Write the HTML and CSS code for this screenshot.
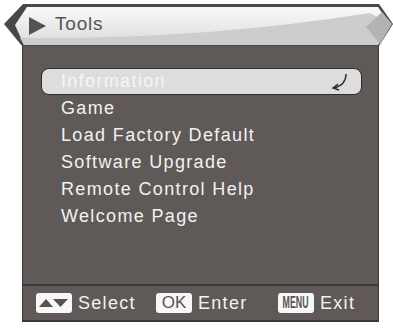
FILE: index.html
```html
<!DOCTYPE html>
<html lang="en">
<head>
    <meta charset="UTF-8">
    <meta name="viewport" content="width=device-width, initial-scale=1.0">
    <title>Tools</title>
    <link rel="stylesheet" href="styles.css">
</head>
<body>
    <div class="screen">
        <header class="title-bar">
            <svg class="title-shape" width="393" height="47" viewBox="0 0 393 47">
                <defs>
                    <linearGradient id="barFill" x1="0" y1="0" x2="0" y2="1">
                        <stop offset="0" stop-color="#fafafa"/>
                        <stop offset="0.7" stop-color="#e4e4e4"/>
                        <stop offset="1" stop-color="#d6d6d6"/>
                    </linearGradient>
                </defs>
                <polygon points="23,4 379,4 393,24 379,46 22,46 4,24" fill="#4a4747"/>
                <polygon points="27,7 378,7 390,24 378,45 24,45 15,25" fill="url(#barFill)"/>
                <path d="M20,38 Q200,40 370,13 L390,24 L378,45 L24,45 Z" fill="#cdcdcd"/>
                <polygon points="366,27 382,12 392,24 380,44" fill="#b3b3b3"/>
                <polygon points="29,17 46,26 29,35" fill="#555252"/>
            </svg>
            <span class="title-text">Tools</span>
        </header>

        <main class="panel">
            <ul class="menu">
                <li class="menu-item active">
                    <span>Information</span>
                    <svg class="enter-icon" width="22" height="22" viewBox="0 0 22 22">
                        <path d="M17 3 Q17 14 5 17" fill="none" stroke="#2e2e2e" stroke-width="1.4"/>
                        <path d="M9 13 L4 17 L10 19" fill="none" stroke="#2e2e2e" stroke-width="1.4"/>
                    </svg>
                </li>
                <li class="menu-item">Game</li>
                <li class="menu-item">Load Factory Default</li>
                <li class="menu-item">Software Upgrade</li>
                <li class="menu-item">Remote Control Help</li>
                <li class="menu-item">Welcome Page</li>
            </ul>

            <footer class="help-bar">
                <div class="help">
                    <span class="key">
                        <svg width="36" height="20" viewBox="0 0 36 20">
                            <polygon points="3,14 10,6 17,14" fill="#555252"/>
                            <polygon points="17,6 32,6 24.5,14" fill="#555252"/>
                        </svg>
                    </span>
                    <span>Select</span>
                </div>
                <div class="help">
                    <span class="key key-ok">OK</span>
                    <span>Enter</span>
                </div>
                <div class="help">
                    <span class="key key-menu"><b>MENU</b></span>
                    <span>Exit</span>
                </div>
            </footer>
        </main>
    </div>
</body>
</html>
```

FILE: styles.css
```css
* {
    margin: 0;
    padding: 0;
    box-sizing: border-box;
}

:root {
    --panel: #5f5a57;
    --edge: #3b3938;
    --text: #f2f2f2;
    --key: #f7f7f7;
}

body {
    background: #ffffff;
    font-family: 'Liberation Sans', Arial, sans-serif;
    color: var(--text);
}

.screen {
    width: 393px;
}

/* Title bar */
.title-bar {
    display: grid;
    height: 46px;
}

.title-shape,
.title-text {
    grid-area: 1 / 1;
}

.title-shape {
    display: block;
}

.title-text {
    align-self: start;
    padding: 13px 0 0 55px;
    font-size: 19px;
    letter-spacing: 0.8px;
    color: #575454;
}

/* Panel */
.panel {
    margin-left: 22px;
    width: 357px;
    height: 276px;
    background: var(--panel);
    border-left: 1px solid var(--edge);
    border-right: 1px solid var(--edge);
    border-bottom: 2px solid var(--edge);
    display: flex;
    flex-direction: column;
}

.menu {
    list-style: none;
    flex: 1;
    padding-top: 22px;
}

.menu-item {
    height: 27px;
    line-height: 27px;
    padding-left: 38px;
    font-size: 18px;
    letter-spacing: 1.35px;
}

.menu-item.active {
    margin-left: 18px;
    width: 321px;
    padding-left: 19px;
    padding-right: 10px;
    background: #dddddd;
    border: 1px solid #2f2d2c;
    border-radius: 8px;
    line-height: 25px;
    color: #f6f6f6;
    display: flex;
    align-items: center;
    justify-content: space-between;
}

.enter-icon {
    display: block;
}

/* Help bar */
.help-bar {
    height: 36px;
    border-top: 2px solid var(--edge);
    display: grid;
    grid-template-columns: 120px 122px auto;
    align-items: center;
    padding-left: 13px;
}

.help {
    display: flex;
    align-items: center;
    gap: 6px;
    font-size: 18px;
    letter-spacing: 1.3px;
}

.key {
    width: 36px;
    height: 20px;
    background: var(--key);
    border-radius: 3px;
    display: flex;
    align-items: center;
    justify-content: center;
    color: #555252;
    letter-spacing: 0;
}

.key svg {
    display: block;
}

.key-ok {
    font-size: 17px;
}

.key-menu b {
    display: inline-block;
    font-size: 16px;
    font-weight: 700;
    transform: scaleX(0.55);
    white-space: nowrap;
}
```
